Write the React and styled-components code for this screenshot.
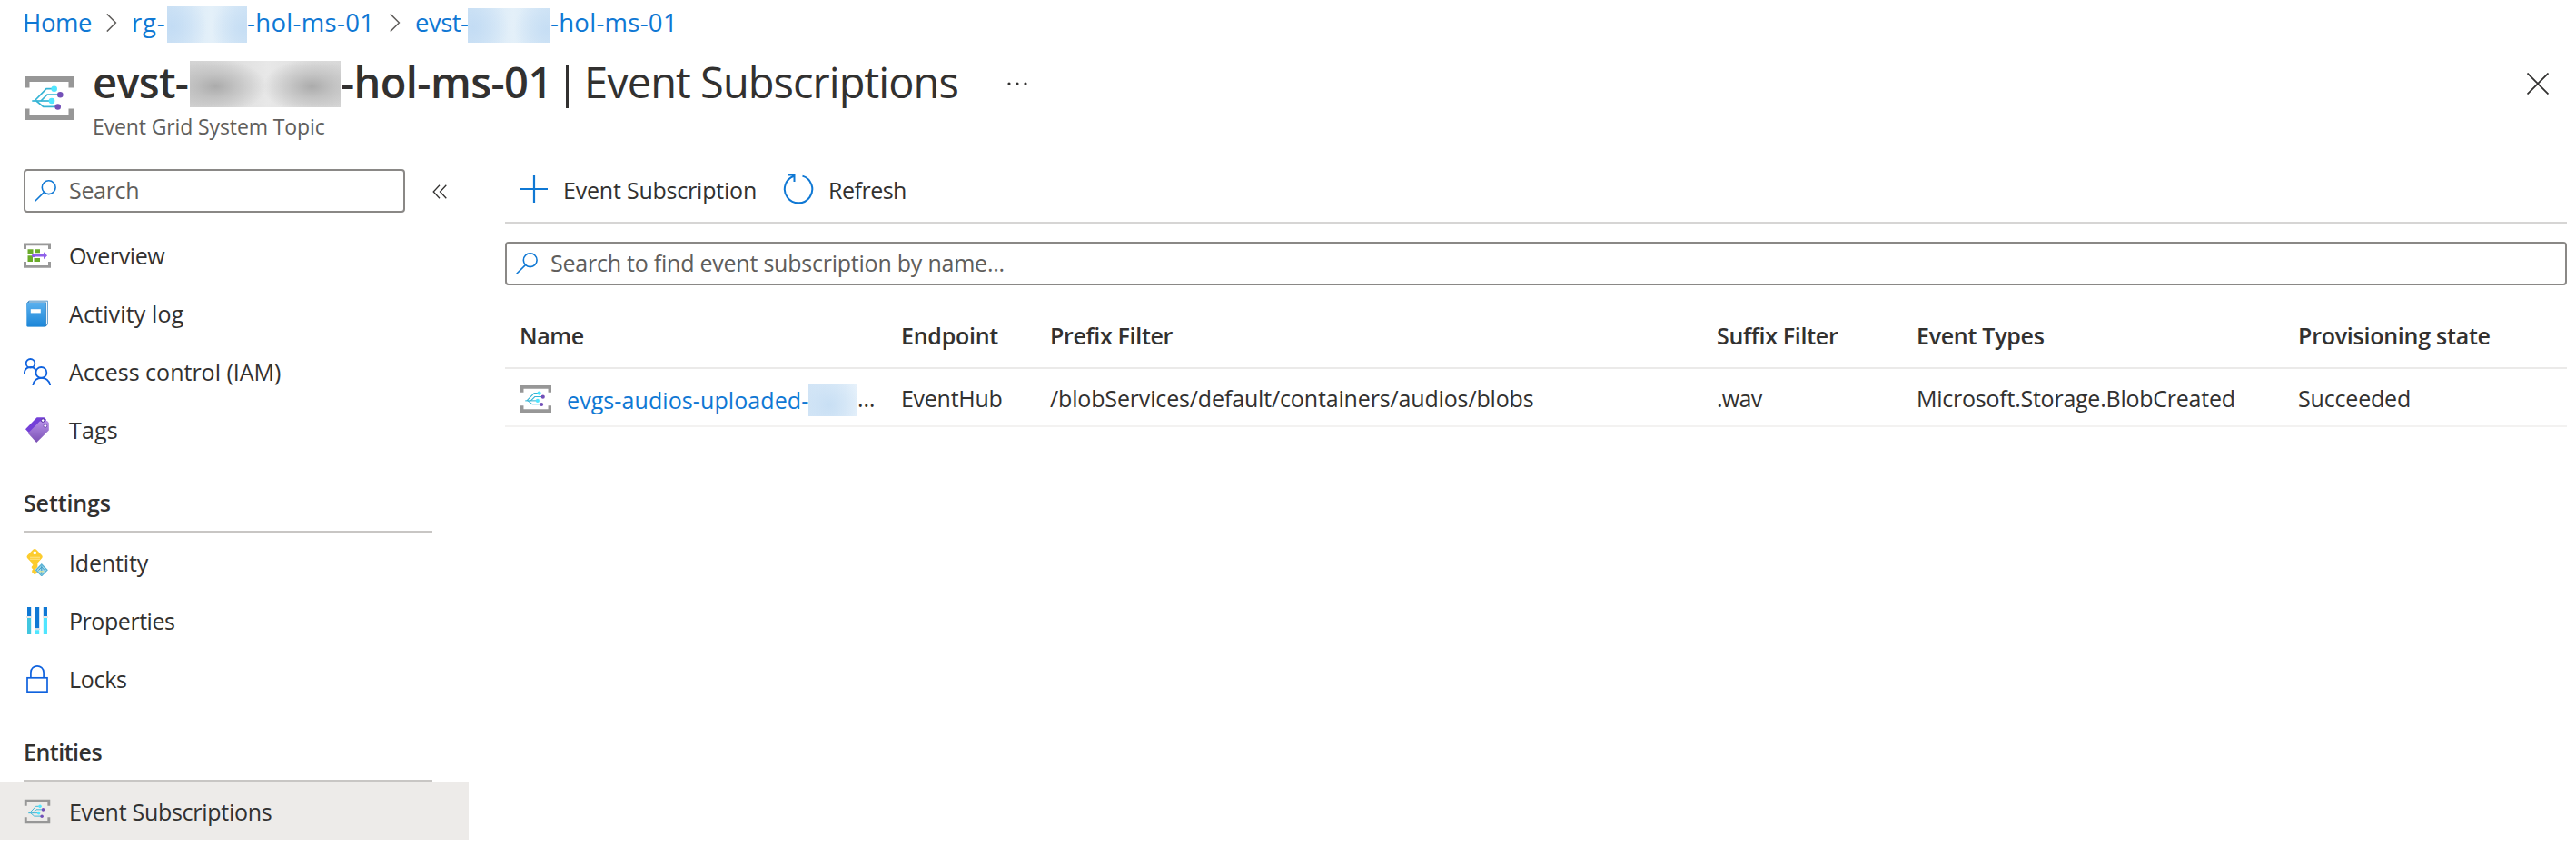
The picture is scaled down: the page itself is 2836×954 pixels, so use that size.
import React from "react";
import styled, { createGlobalStyle } from "styled-components";

const GlobalStyle = createGlobalStyle`
  * { box-sizing: border-box; }
  body {
    margin: 0;
    background: #fff;
    color: #323130;
    font-family: "Open Sans", "Noto Sans", sans-serif;
    font-size: 25px;
  }
`;

const Page = styled.div`
  height: 954px;
  overflow: hidden;
  white-space: nowrap;
`;

const Text = styled.span`
  letter-spacing: ${(p) => p.$track || 0}px;
`;

/* ---------- breadcrumb ---------- */

const Breadcrumb = styled.nav`
  display: flex;
  height: 48px;
  padding-left: 25px;
  color: #0f78d4;
  font-size: 27.5px;
  line-height: 49px;
`;

const Crumb = styled.a`
  display: flex;
  flex: none;
  width: ${(p) => p.$width}px;
`;

const CrumbPart = styled(Text)`
  flex: none;
  width: ${(p) => (p.$width ? `${p.$width}px` : "auto")};
`;

const CrumbChevron = styled.svg`
  flex: none;
  width: 12px;
  height: 20px;
  margin: 15px 16px 0 0;
`;

const BlueMask = styled.span`
  flex: none;
  width: ${(p) => p.$width}px;
  height: ${(p) => p.$height}px;
  margin-top: ${(p) => p.$top}px;
  background: radial-gradient(circle at 6% 55%, #c3dcf4 0, rgba(195, 220, 244, 0) 45%),
    radial-gradient(circle at 96% 60%, #c6def4 0, rgba(198, 222, 244, 0) 40%),
    linear-gradient(90deg, #cfe3f5, #e4f0f9 55%, #d2e5f6);
`;

/* ---------- title ---------- */

const Header = styled.header`
  display: flex;
  height: 108px;
  padding: 10px 30px 0 27px;
`;

const TopicIconLarge = styled.svg`
  flex: none;
  width: 54px;
  height: 48px;
  margin-top: 26px;
`;

const Titles = styled.div`
  flex: 1;
  margin-left: 21px;
`;

const Title = styled.h1`
  display: flex;
  margin: 0;
  height: 64px;
  font-size: 47px;
  font-weight: 600;
  line-height: 64px;
`;

const TitlePart = styled(Text)`
  flex: none;
  width: ${(p) => (p.$width ? `${p.$width}px` : "auto")};
`;

const TitleBar = styled.span`
  flex: none;
  width: 3px;
  height: 48px;
  margin: 13px 17px 0 16px;
  background: #323130;
`;

const Blade = styled(Text)`
  font-weight: 400;
`;

const GreyMask = styled.span`
  flex: none;
  width: 166px;
  height: 51px;
  margin-top: 9px;
  background: radial-gradient(ellipse 56px 30px at 17% 55%, #ababab 0, rgba(182, 182, 182, 0.7) 40%, rgba(210, 210, 210, 0) 100%),
    radial-gradient(ellipse 54px 30px at 81% 55%, #ababab 0, rgba(182, 182, 182, 0.7) 40%, rgba(210, 210, 210, 0) 100%),
    linear-gradient(90deg, #d3d3d3, #e8e8e8 52%, #d8d8d8);
`;

const MoreIcon = styled.svg`
  flex: none;
  width: 24px;
  height: 6px;
  margin: 31px 0 0 52px;
`;

const Subtitle = styled.div`
  height: 34px;
  color: #605e5c;
  font-size: 23px;
  line-height: 34px;
`;

const CloseIcon = styled.svg`
  flex: none;
  width: 24px;
  height: 24px;
  margin-top: 22px;
`;

/* ---------- sidebar ---------- */

const Body = styled.div`
  display: flex;
`;

const Sidebar = styled.aside`
  flex: none;
  width: 516px;
  padding-top: 30px;
`;

const SearchBox = styled.div`
  display: flex;
  align-items: center;
  width: ${(p) => (p.$width ? `${p.$width}px` : "auto")};
  height: 48px;
  padding: 0 0 2px 10px;
  border: 2px solid #8a8886;
  border-radius: 4px;
  color: #605e5c;
`;

const SearchGlyph = styled.svg`
  flex: none;
  width: 24px;
  height: 24px;
  margin: 2px 14px 0 0;
`;

const SidebarTop = styled.div`
  display: flex;
  align-items: center;
  margin: 0 0 14px 26px;
`;

const CollapseIcon = styled.svg`
  width: 16px;
  height: 16px;
  margin: 2px 0 0 30px;
`;

const NavItem = styled.a`
  display: flex;
  align-items: center;
  height: 64px;
  padding: 2px 0 0 26px;
  background: ${(p) => (p.$selected ? "#edebe9" : "transparent")};
`;

const NavIcon = styled.svg`
  flex: none;
  width: 30px;
  height: 30px;
  margin-right: 20px;
`;

const SectionTitle = styled.h2`
  height: 82px;
  margin: 0 40px 0 26px;
  padding-top: 32px;
  border-bottom: 2px solid #c8c6c4;
  font-size: 25px;
  font-weight: 600;
  line-height: 34px;
`;

/* ---------- main pane ---------- */

const Main = styled.main`
  flex: 1;
  padding: 30px 10px 0 40px;
`;

const Toolbar = styled.div`
  display: flex;
  height: 60px;
  margin-bottom: 20px;
  padding: 0 0 12px 16px;
  border-bottom: 2px solid #d6d5d4;
`;

const ToolButton = styled.a`
  display: flex;
  align-items: center;
  margin-right: ${(p) => p.$gap || 0}px;
`;

const ToolIcon = styled.svg`
  width: 34px;
  height: 34px;
  margin: 0 ${(p) => p.$gap}px 2px 0;
`;

const Table = styled.div`
  margin-top: 18px;
`;

const columns = "420px 164px 734px 220px 420px 1fr";

const HeadRow = styled.div`
  display: grid;
  grid-template-columns: ${columns};
  align-items: center;
  height: 74px;
  padding-top: 2px;
  border-bottom: 2px solid #ebeae9;
  font-weight: 600;
`;

const Row = styled.div`
  display: grid;
  grid-template-columns: ${columns};
  align-items: center;
  height: 64px;
  padding-top: 1px;
  border-bottom: 2px solid #f3f2f1;
`;

const Cell = styled.div`
  padding-left: 16px;
`;

const NameCell = styled(Cell)`
  display: flex;
  align-items: center;
  height: 61px;
`;

const RowIcon = styled.svg`
  flex: none;
  width: 34px;
  height: 30px;
  margin: 2px 17px 0 1px;
`;

const NameLink = styled.a`
  flex: none;
  width: 266px;
  padding-top: 4px;
  color: #0f78d4;
`;

const NameMask = styled.span`
  flex: none;
  width: 53px;
  height: 35px;
  margin: 5px 1px 0 0;
  background: radial-gradient(circle at 42% 65%, #c8dff4 0, rgba(205, 226, 245, 0.5) 60%, rgba(225, 238, 250, 0) 100%),
    linear-gradient(90deg, #d3e5f6, #e8f2fb);
`;

/* ---------- drawings ---------- */

function TopicArt() {
  return (
    <>
      <path d="M0 12.5V0H54V12.5H48.5V6H5.5V12.5Z M0 35.5V48H54V35.5H48.5V42H5.5V35.5Z" fill="#979797" />
      <g fill="none" stroke="#35b4d5" strokeWidth="1.7">
        <path d="M8.3 27H30" />
        <path d="M11 27L24 13.7H32" />
        <path d="M18 27L25 20H39" />
        <path d="M13 27L20.7 33.3H36" />
      </g>
      <circle cx="32.7" cy="13.7" r="3.3" fill="#50e6ff" />
      <circle cx="30" cy="27" r="3.3" fill="#50e6ff" />
      <circle cx="39.3" cy="20.2" r="3.3" fill="#7350b8" />
      <circle cx="36.7" cy="33.5" r="3.3" fill="#7350b8" />
    </>
  );
}

function Glass() {
  return (
    <SearchGlyph viewBox="0 0 24 24" fill="none" stroke="#0f78d4" strokeWidth="1.6">
      <circle cx="15.7" cy="8.2" r="7.4" />
      <path d="M10.4 13.6L0.7 23.2" />
    </SearchGlyph>
  );
}

const navArt = {
  overview: (
    <>
      <path d="M0 8V1.5H30V8H27V4.2H3V8Z M0 22V28.7H30V22H27V26H3V22Z" fill="#999" />
      <path d="M4.5 8.2H10.5V13.6H4.5Z M12 8.2H18V12.2H12Z M4.5 15.2H10V22H4.5Z M11.5 18H18V22H11.5Z" fill="#6aab2a" />
      <circle cx="11" cy="15.2" r="2" fill="#8a5be6" />
      <path d="M11 14H22V11.2L26 15.2L22 19.2V16.4H11Z" fill="#8f60ea" />
    </>
  ),
  log: (
    <>
      <defs>
        <linearGradient id="book" x1="0" y1="0" x2="0" y2="1">
          <stop offset="0" stopColor="#5ab0ee" />
          <stop offset="1" stopColor="#1c86d8" />
        </linearGradient>
      </defs>
      <path d="M3.3 3.5L6 0.8H26.6V27L24.5 29.2H4.5Z" fill="#1f74b8" />
      <path d="M5.4 2.4L6.4 1.6H26V26.8L24.8 28V2.4Z" fill="#f2f7fb" />
      <rect x="3.3" y="3" width="21" height="26.4" rx="0.8" fill="url(#book)" />
      <rect x="7.8" y="10.2" width="11" height="4.2" fill="#fff" />
    </>
  ),
  iam: (
    <g fill="none" stroke="#0f62de" strokeWidth="1.8">
      <circle cx="7.5" cy="5.8" r="4.8" />
      <circle cx="19.4" cy="15.9" r="5.9" />
      <path d="M0.8 17C0.8 9 11 8 13.6 13.6" />
      <path d="M10.3 30C11.5 19 27.5 19 29.2 30" />
    </g>
  ),
  tags: (
    <>
      <defs>
        <linearGradient id="tag" x1="0" y1="0" x2="0" y2="1">
          <stop offset="0" stopColor="#b791e8" />
          <stop offset="1" stopColor="#7a50b4" />
        </linearGradient>
      </defs>
      <path d="M2 14.2L14.6 1.2H22.5L24.8 3.6L24.6 9L6.8 19.2Z" fill="#7440d8" />
      <path d="M4.8 18.8L17.8 5.4L26 5L27.8 7.2V15.6L14.2 29Z" fill="url(#tag)" />
      <circle cx="21.2" cy="4.6" r="1.8" fill="#fff" stroke="#5228a0" strokeWidth="1" />
      <circle cx="23.8" cy="10.6" r="1.9" fill="#fff" stroke="#7850b8" strokeWidth="1" />
    </>
  ),
  identity: (
    <>
      <path d="M12.2 0Q13.2 0 14 0.8L20.3 7.2Q21.3 8.6 20.3 10L15.4 15.6V25.6L12.4 28.6L9.2 25.8V23.8L10.4 22.6L8.8 21V19.4L10.4 17.8L9.2 16.4V15.4L4 10Q3 8.6 4 7.2L10.4 0.8Q11.2 0 12.2 0Z" fill="#fccc2e" />
      <circle cx="12.3" cy="4.3" r="1.9" fill="#fff" />
      <path d="M7 9.2H18M7 11.2H18" stroke="#fde48a" strokeWidth="1.1" />
      <path d="M19.8 15.6L27.2 23L19.8 30.4L12.4 23Z" fill="#fff" />
      <path d="M19.8 17L26 23.2L19.8 29.6L13.6 23.2Z" fill="#a5dbea" stroke="#59b1d4" strokeWidth="1.3" />
      <path d="M19.8 18.5V28M16.5 23.5L19.8 20L23.1 23.5" stroke="#3a9bc8" strokeWidth="1" fill="none" />
      <path d="M17.5 24.8H22" stroke="#d8e2a0" strokeWidth="1.4" />
    </>
  ),
  properties: (
    <>
      <path d="M4 0H8.2V10H4Z M12.8 0H17.2V23.2H12.8Z M21.8 0H26V10H21.8Z" fill="#0f78d4" />
      <path d="M4 12H8.2V30H4Z" fill="#41c6df" />
      <path d="M12.8 25.2H17.2V30H12.8Z M21.8 12H26V30H21.8Z" fill="#50e6ff" />
      <path d="M3 10.2H9.2V11.8H3Z M12 23.6H18.2V25H12Z M21 10.2H27V11.8H21Z" fill="#dedede" />
    </>
  ),
  locks: (
    <g fill="none" stroke="#0f62de" strokeWidth="1.7">
      <rect x="4" y="13.8" width="22" height="15.4" />
      <path d="M7.9 13.8V8C7.9 -1.4 22.1 -1.4 22.1 8V13.8" />
    </g>
  ),
  topic: (
    <g transform="translate(0.8 1.8) scale(0.527 0.55)">
      <TopicArt />
    </g>
  ),
};

function NavEntry({ art, label, track, selected }) {
  return (
    <NavItem $selected={selected}>
      <NavIcon viewBox="0 0 30 30">{navArt[art]}</NavIcon>
      <Text $track={track}>{label}</Text>
    </NavItem>
  );
}

function Chevron() {
  return (
    <CrumbChevron viewBox="0 0 12 20" fill="none" stroke="#605e5c" strokeWidth="1.5">
      <path d="M0.8 0.4L10.4 10L0.8 19.6" />
    </CrumbChevron>
  );
}

export default function App() {
  return (
    <Page>
      <GlobalStyle />
      <Breadcrumb>
        <Crumb $width={92}>
          <CrumbPart $track={-0.4}>Home</CrumbPart>
        </Crumb>
        <Chevron />
        <Crumb $width={284}>
          <CrumbPart $width={39} $track={0.8}>rg-</CrumbPart>
          <BlueMask $width={88} $height={40} $top={7} />
          <CrumbPart $track={0.35}>-hol-ms-01</CrumbPart>
        </Crumb>
        <Chevron />
        <Crumb $width={300}>
          <CrumbPart $width={58} $track={-0.5}>evst-</CrumbPart>
          <BlueMask $width={91} $height={38} $top={9} />
          <CrumbPart $track={0.3}>-hol-ms-01</CrumbPart>
        </Crumb>
      </Breadcrumb>
      <Header>
        <TopicIconLarge viewBox="0 0 54 48">
          <TopicArt />
        </TopicIconLarge>
        <Titles>
          <Title>
            <TitlePart $width={107} $track={-0.7}>evst-</TitlePart>
            <GreyMask />
            <TitlePart $width={232} $track={-0.6}>-hol-ms-01</TitlePart>
            <TitleBar />
            <Blade $track={-0.95}>Event Subscriptions</Blade>
            <MoreIcon viewBox="0 0 24 6" fill="#323130">
              <circle cx="4" cy="3" r="1.6" />
              <circle cx="13" cy="3" r="1.6" />
              <circle cx="22" cy="3" r="1.6" />
            </MoreIcon>
          </Title>
          <Subtitle>
            <Text $track={-0.12}>Event Grid System Topic</Text>
          </Subtitle>
        </Titles>
        <CloseIcon viewBox="0 0 24 24" stroke="#323130" strokeWidth="1.8">
          <path d="M0.5 0.5L23.5 23.5M23.5 0.5L0.5 23.5" />
        </CloseIcon>
      </Header>
      <Body>
        <Sidebar>
          <SidebarTop>
            <SearchBox $width={420}>
              <Glass />
              <Text $track={-0.32}>Search</Text>
            </SearchBox>
            <CollapseIcon viewBox="0 0 16 16" fill="none" stroke="#323130" strokeWidth="1.3">
              <path d="M8 0.7L1.2 8L8 15.3M15.3 0.7L8.5 8L15.3 15.3" />
            </CollapseIcon>
          </SidebarTop>
          <NavEntry art="overview" label="Overview" track={-0.39} />
          <NavEntry art="log" label="Activity log" track={0.15} />
          <NavEntry art="iam" label="Access control (IAM)" track={0} />
          <NavEntry art="tags" label="Tags" track={0.15} />
          <SectionTitle>
            <Text $track={-0.13}>Settings</Text>
          </SectionTitle>
          <NavEntry art="identity" label="Identity" track={-0.15} />
          <NavEntry art="properties" label="Properties" track={-0.45} />
          <NavEntry art="locks" label="Locks" track={-0.3} />
          <SectionTitle>
            <Text $track={-0.5}>Entities</Text>
          </SectionTitle>
          <NavEntry art="topic" label="Event Subscriptions" track={-0.28} selected />
        </Sidebar>
        <Main>
          <Toolbar>
            <ToolButton $gap={29}>
              <ToolIcon $gap={14} viewBox="0 0 34 34" fill="none" stroke="#0f78d4" strokeWidth="2.2">
                <path d="M16 2V32M1 17H31" />
              </ToolIcon>
              <Text $track={-0.21}>Event Subscription</Text>
            </ToolButton>
            <ToolButton>
              <ToolIcon $gap={16} viewBox="0 0 34 34" fill="none" stroke="#0f78d4" strokeWidth="2">
                <path d="M21.5 2.6A15.2 15.2 0 1 1 12 2.8M5.5 1.5H12.5V9" />
              </ToolIcon>
              <Text $track={-0.5}>Refresh</Text>
            </ToolButton>
          </Toolbar>
          <SearchBox>
            <Glass />
            <Text $track={-0.23}>Search to find event subscription by name...</Text>
          </SearchBox>
          <Table>
            <HeadRow>
              <Cell><Text $track={-0.38}>Name</Text></Cell>
              <Cell><Text $track={-0.25}>Endpoint</Text></Cell>
              <Cell><Text $track={-0.32}>Prefix Filter</Text></Cell>
              <Cell><Text $track={-0.3}>Suffix Filter</Text></Cell>
              <Cell><Text $track={-0.28}>Event Types</Text></Cell>
              <Cell><Text $track={-0.24}>Provisioning state</Text></Cell>
            </HeadRow>
            <Row>
              <NameCell>
                <RowIcon viewBox="0 0 54 48" preserveAspectRatio="none">
                  <TopicArt />
                </RowIcon>
                <NameLink><Text $track={0.09}>evgs-audios-uploaded-</Text></NameLink>
                <NameMask />
                <Text>…</Text>
              </NameCell>
              <Cell><Text $track={-0.27}>EventHub</Text></Cell>
              <Cell><Text $track={-0.15}>/blobServices/default/containers/audios/blobs</Text></Cell>
              <Cell><Text $track={-0.7}>.wav</Text></Cell>
              <Cell><Text $track={-0.24}>Microsoft.Storage.BlobCreated</Text></Cell>
              <Cell><Text $track={-0.18}>Succeeded</Text></Cell>
            </Row>
          </Table>
        </Main>
      </Body>
    </Page>
  );
}
